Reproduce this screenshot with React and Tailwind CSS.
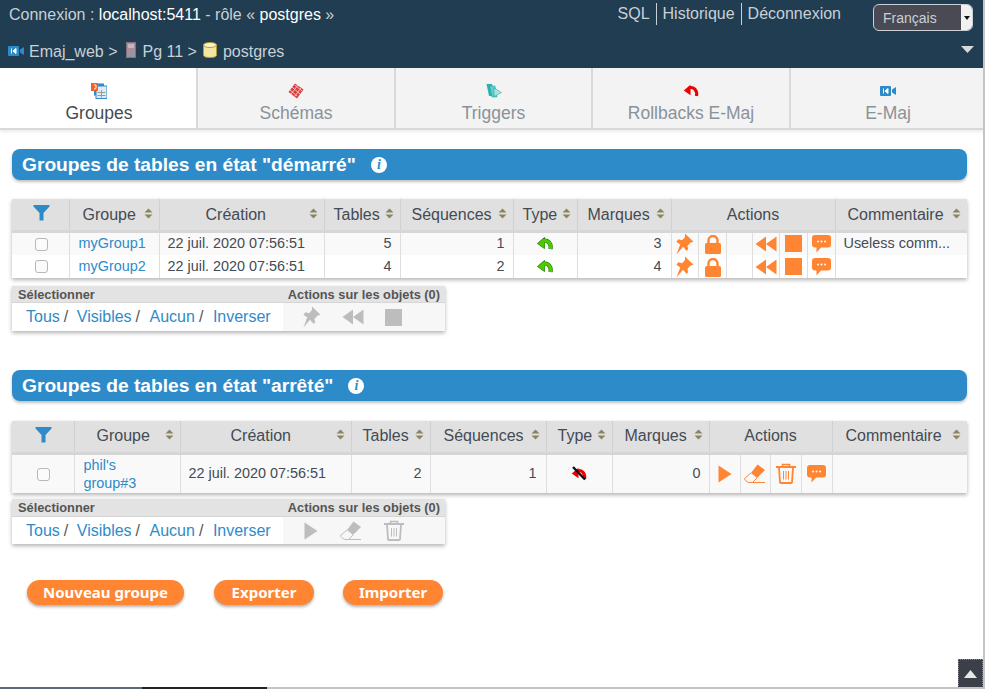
import React from "react";

const font = "font-['Liberation_Sans',Arial,sans-serif]";

function Sort() {
  return (
    <svg width="9" height="11" viewBox="0 0 9 11" className="shrink-0">
      <path d="M4.5 0.5 L8.5 4.5 H0.5 Z M4.5 10.5 L0.5 6.5 H8.5 Z" fill="#8a8560" />
    </svg>
  );
}

function Funnel({ color = "#2e8bc9" }) {
  return (
    <svg width="17" height="17" viewBox="0 0 17 17">
      <path d="M0.5 1 H16.5 V2.5 L10.5 9 V16.5 H6.5 V9 L0.5 2.5 Z" fill={color} />
    </svg>
  );
}

function Pin({ color = "#ff8533" }) {
  return (
    <svg width="19" height="22" viewBox="0 0 20 23">
      <path
        d="M10.5 0.5 L19.5 9 L16.5 10 L13 13.5 L14 17 L12 18.5 L8.5 14.5 L1.5 22.5 L5.5 12 L1.5 9 L3.5 6.5 L7.5 7.5 L10.5 4 Z"
        fill={color}
      />
    </svg>
  );
}

function Lock({ color = "#ff8533" }) {
  return (
    <svg width="16" height="19" viewBox="0 0 16 19" className="ml-[2px] mt-[2px]">
      <path d="M3.5 8 V5.5 a4.5 4.5 0 0 1 9 0 V8" fill="none" stroke={color} strokeWidth="2.4" />
      <rect x="0" y="8" width="16" height="11" rx="1.5" fill={color} />
    </svg>
  );
}

function Rewind({ color = "#ff8533" }) {
  return (
    <svg width="22" height="16" viewBox="0 0 22 16">
      <path d="M0.5 8 L11 0.5 V15.5 Z M11 8 L21.5 0.5 V15.5 Z" fill={color} />
    </svg>
  );
}

function Stop({ color = "#ff8533" }) {
  return <div className="h-[17px] w-[17px]" style={{ backgroundColor: color }} />;
}

function Chat() {
  return (
    <svg width="19" height="18" viewBox="0 0 19 18">
      <path d="M3 0 H16 a3 3 0 0 1 3 3 V9.5 a3 3 0 0 1 -3 3 H9 L4.5 17.5 V12.5 H3 a3 3 0 0 1 -3 -3 V3 a3 3 0 0 1 3 -3 Z" fill="#ff8533" />
      <circle cx="6" cy="6.5" r="1" fill="#fff" />
      <circle cx="9.5" cy="6.5" r="1" fill="#fff" />
      <circle cx="13" cy="6.5" r="1" fill="#fff" />
    </svg>
  );
}

function Play({ color = "#ff8533" }) {
  return (
    <svg width="14" height="18" viewBox="0 0 14 18">
      <path d="M0.5 0.5 L13.5 9 L0.5 17.5 Z" fill={color} />
    </svg>
  );
}

function Eraser({ color = "#ff8533" }) {
  return (
    <svg width="22" height="20" viewBox="0 0 22 20">
      <path d="M13.5 0.5 L21 6 L13 14 L7 9 Z" fill={color} />
      <path d="M7 9 L1 14 Q0 15.5 1.5 16.5 L4.5 18.5 H8.5 L13 14" fill="none" stroke={color} strokeWidth="1" />
      <path d="M8.5 18.5 H21" stroke={color} strokeWidth="1" />
    </svg>
  );
}

function Trash({ color = "#ff8533" }) {
  return (
    <svg width="20" height="21" viewBox="0 0 20 21" fill="none" stroke={color}>
      <path d="M0 4 H20" strokeWidth="2" />
      <path d="M6.5 4 V1.5 H13.5 V4" strokeWidth="1.6" />
      <path d="M3 4.5 L4 19.5 Q4 20 5 20 H15 Q16 20 16 19.5 L17 4.5" strokeWidth="1.8" />
      <path d="M7.5 8 V16.5 M10 8 V16.5 M12.5 8 V16.5" strokeWidth="1" />
    </svg>
  );
}

// curved "undo" arrow used for the type column and the rollback tab
function UndoArrow({ color, outline }) {
  const arc = "M13.5 12 C14.5 6 10.5 2.5 6 3.8";
  return (
    <svg width="16" height="14" viewBox="0 0 16 14">
      {outline && <path d={arc} fill="none" stroke={outline} strokeWidth="4.2" />}
      {outline && <path d="M0.5 6.5 L7.5 0.5 V11.5 Z" fill={outline} stroke={outline} strokeWidth="0.8" />}
      <path d={arc} fill="none" stroke={color} strokeWidth="3.2" />
      <path d="M0.8 6.5 L7.5 0.8 V11.2 Z" fill={color} />
    </svg>
  );
}

function ReverseOff() {
  return (
    <svg width="16" height="15" viewBox="0 0 16 15">
      <path d="M13.5 13 C14.5 7 10.5 3.5 6 4.8" fill="none" stroke="#ee0000" strokeWidth="3.2" />
      <path d="M0.8 7.5 L7.5 1.8 V12.2 Z" fill="#ee0000" />
      <path d="M2 1 L14 13.5" stroke="#111" strokeWidth="2.4" />
    </svg>
  );
}

function GroupsIcon() {
  return (
    <svg width="16" height="16" viewBox="0 0 16 16">
      <rect x="3" y="0.5" width="10" height="12" fill="#2e8bc9" />
      <rect x="5" y="3" width="11" height="12.5" fill="#dfeaf3" stroke="#2e8bc9" />
      <path d="M6.5 9.5 H14.5 M6.5 12.5 H14.5 M10.5 7 V14.5" stroke="#9a9a9a" />
      <rect x="0" y="0" width="7" height="8" fill="#f2622b" />
      <path d="M3 2 H5 V5 Q5 6 3 6" stroke="#fff" fill="none" />
    </svg>
  );
}

function SchemaIcon() {
  return (
    <svg width="16" height="16" viewBox="0 0 16 16">
      <path d="M7 0.5 L15.5 6.5 L9 15.5 L0.5 9 Z" fill="#d9403f" />
      <path d="M4 4 L12 11 M7 2 L14 8 M2 7 L9 13 M10 2 L3 11 M13 5 L7 13" stroke="#f6c7c4" strokeWidth="0.9" />
    </svg>
  );
}

function TriggerIcon() {
  return (
    <svg width="16" height="16" viewBox="0 0 16 16">
      <path d="M0.5 1 H6 L8 13 H3 Z" fill="#2bb3b1" />
      <path d="M3.5 3 H9 L11 14 H6 Z" fill="#5fcfc9" stroke="#1f9a9a" strokeWidth="0.5" />
      <path d="M8 5 L15.5 9.5 L8 13.5 Z" fill="#a7e3e5" stroke="#1f9a9a" strokeWidth="0.5" />
    </svg>
  );
}

function Camera({ w = 16, h = 12 }) {
  return (
    <svg width={w} height={h} viewBox="0 0 16 12">
      <rect x="0" y="1" width="11" height="10" rx="1" fill="#2e8bc9" />
      <path d="M12 4.5 L16 2 V10 L12 7.5 Z" fill="#2e8bc9" />
      <path d="M3.5 3.5 V8.5 M8 3.5 L5 6 L8 8.5 Z" stroke="#fff" fill="#fff" strokeWidth="1" />
    </svg>
  );
}

function ServerIcon() {
  return (
    <svg width="10" height="16" viewBox="0 0 10 16">
      <rect x="0.5" y="0.5" width="9" height="15" fill="#a88f9c" stroke="#857280" />
      <path d="M2 3 H8 M2 5 H8" stroke="#e5dbe0" />
      <rect x="5" y="11" width="3" height="3" fill="#39c0c0" />
    </svg>
  );
}

function DbIcon() {
  return (
    <svg width="14" height="16" viewBox="0 0 14 16">
      <path d="M0.5 3 V13 Q0.5 15.5 7 15.5 Q13.5 15.5 13.5 13 V3 Z" fill="#f3e6a0" stroke="#b39b3d" />
      <ellipse cx="7" cy="3" rx="6.5" ry="2.5" fill="#fbf3c4" stroke="#b39b3d" />
    </svg>
  );
}

function Tab({ icon, label, active, className }) {
  return (
    <div
      className={`flex h-[60px] flex-col items-center justify-between pb-[5px] pt-[15px] ${className} ${
        active ? "bg-white text-[#444b54]" : "bg-[#f3f3f3] text-[#8a9299]"
      }`}
    >
      <div className="flex h-[16px] items-center">{icon}</div>
      <div className="text-[17.5px] leading-[20px]">{label}</div>
    </div>
  );
}

function Banner({ title }) {
  return (
    <div className="mx-3 flex h-[31px] items-center rounded-[8px] bg-[#2e8bc9] pl-[10px] text-white shadow-[0_2px_3px_rgba(0,0,0,0.25)]">
      <span className="text-[19.2px] font-bold leading-none">{title}</span>
      <span className="ml-[15px] flex h-[16px] w-[16px] items-center justify-center rounded-full bg-white font-['Liberation_Serif',serif] text-[14px] font-bold italic leading-none text-[#2e8bc9]">
        i
      </span>
    </div>
  );
}

function HeadCell({ children, sort = true, pad = "justify-center" }) {
  return (
    <th className="h-[32px] border-r border-[#d0d0d0] p-0 text-[16px] font-normal text-[#444b54] last:border-r-0">
      <div className={`relative flex items-center ${pad} px-[8px]`}>
        <span>{children}</span>
        {sort && <span className="absolute right-[6px] top-[5px]"><Sort /></span>}
      </div>
    </th>
  );
}

function FooterBar({ icons, gaps, top, head, body }) {
  return (
    <div className={`mx-3 w-[433px] shadow-[0_2px_4px_rgba(0,0,0,0.3)] ${top}`}>
      <div className={`flex items-center justify-between bg-[#e3e3e3] pl-[6px] pr-[5px] pt-[2px] text-[12.8px] font-bold leading-none text-[#555] ${head}`}>
        <span>Sélectionner</span>
        <span>Actions sur les objets (0)</span>
      </div>
      <div className={`flex border-t border-[#d6d6d6] bg-white ${body}`}>
        <div className="flex w-[271px] items-center pl-[14px] text-[16px] text-[#2e8bc9]">
          <span>Tous</span>
          <span className="ml-1 text-[#555]">/</span>
          <span className="ml-[8.5px]">Visibles</span>
          <span className="ml-1 text-[#555]">/</span>
          <span className="ml-[9.5px]">Aucun</span>
          <span className="ml-1 text-[#555]">/</span>
          <span className="ml-[9.5px]">Inverser</span>
        </div>
        <div className={`flex flex-1 items-center bg-[#f7f7f7] ${gaps}`}>{icons}</div>
      </div>
    </div>
  );
}

function ActionCell({ children }) {
  return (
    <td className="border-r border-[#dedede] p-0 last:border-r-0">
      <div className="flex items-center justify-center">{children}</div>
    </td>
  );
}

function GroupRow({ name, tables, seqs, marks, comment, shaded }) {
  return (
    <tr className={`${shaded ? "h-[24px] bg-[#f9f9f9]" : "h-[23px] bg-white"} text-[14.4px] text-[#444b54]`}>
      <td className="border-r border-[#dedede] p-0 pl-[3px] text-center">
        <span className="inline-block h-[13px] w-[13px] rounded-[3px] border border-[#b8b8b8] bg-[#fbfbfb] align-middle" />
      </td>
      <td className="border-r border-[#dedede] p-0 pl-[9px] text-[#2e8bc9]">{name}</td>
      <td className="border-r border-[#dedede] p-0 pl-[8px]">22 juil. 2020 07:56:51</td>
      <td className="border-r border-[#dedede] p-0 pr-[8px] text-right">{tables}</td>
      <td className="border-r border-[#dedede] p-0 pr-[8px] text-right">{seqs}</td>
      <td className="border-r border-[#dedede] p-0">
        <div className="flex justify-center">
          <UndoArrow color="#4ccc00" outline="#1f6b00" />
        </div>
      </td>
      <td className="border-r border-[#dedede] p-0 pr-[9px] text-right">{marks}</td>
      <ActionCell><Pin /></ActionCell>
      <ActionCell><Lock /></ActionCell>
      <ActionCell />
      <ActionCell><Rewind /></ActionCell>
      <ActionCell><Stop /></ActionCell>
      <ActionCell><Chat /></ActionCell>
      <td className="p-0 pl-[8px]">{comment}</td>
    </tr>
  );
}

export default function App() {
  return (
    <div className={`relative h-[689px] w-[985px] overflow-hidden bg-white ${font}`}>
      {/* header */}
      <div className="relative h-[68px] w-[983px] bg-[#203d52] text-[16px] text-[#c9d0d6]">
        <div className="flex items-start justify-between pl-[9px] pt-[4px]">
          <div className="leading-[22px]">
            Connexion : <span className="text-white">localhost:5411</span> - rôle « <span className="text-white">postgres</span> »
          </div>
          <div className="flex">
            <div className="mr-[32px] flex h-[20px] items-center leading-[22px]">
              <span className="border-r border-[#c9d0d6] pr-[6px]">SQL</span>
              <span className="border-r border-[#c9d0d6] px-[6px]">Historique</span>
              <span className="pl-[6px]">Déconnexion</span>
            </div>
            <div className="mr-[10px] flex h-[27px] w-[100px] overflow-hidden rounded-[6px] border border-[#c9d0d6] bg-[#4a4a55]">
              <span className="flex-1 pl-[9px] text-[14px] leading-[27px]">Français</span>
              <span className="flex w-[11px] items-center justify-center bg-[#f1f1f1]">
                <svg width="6" height="4" viewBox="0 0 6 4"><path d="M0 0 H6 L3 4 Z" fill="#111" /></svg>
              </span>
            </div>
          </div>
        </div>
        <div className="flex items-center pl-[8px] pt-[10px] leading-[22px]">
          <span className="-mt-[2px]"><Camera /></span>
          <span className="ml-[5px]">Emaj_web &gt;</span>
          <span className="-mt-[4px] ml-[8px]"><ServerIcon /></span>
          <span className="ml-[7px]">Pg 11 &gt;</span>
          <span className="-mt-[4px] ml-[6px]"><DbIcon /></span>
          <span className="ml-[6px]">postgres</span>
        </div>
        <svg width="13" height="7" viewBox="0 0 13 7" className="absolute right-[9px] top-[46px]">
          <path d="M0 0 H13 L6.5 7 Z" fill="#d8d8d8" />
        </svg>
      </div>

      {/* tabs */}
      <div className="flex w-[983px] border-b-2 border-[#d9d9d9] shadow-[0_2px_3px_rgba(0,0,0,0.08)]">
        <Tab active icon={<GroupsIcon />} label="Groupes" className="w-[198px] border-r-2 border-[#d9d9d9] pl-[2px]" />
        <Tab icon={<SchemaIcon />} label="Schémas" className="w-[198px] border-r-2 border-[#d9d9d9]" />
        <Tab icon={<TriggerIcon />} label="Triggers" className="w-[197px] border-r-2 border-[#d9d9d9]" />
        <Tab icon={<UndoArrow color="#ee0000" />} label="Rollbacks E-Maj" className="w-[198px] border-r-2 border-[#d9d9d9]" />
        <Tab icon={<Camera />} label="E-Maj" className="flex-1 pl-[2px]" />
      </div>

      {/* started groups */}
      <div className="w-[979px] pt-[19px]">
        <Banner title={'Groupes de tables en état "démarré"'} />
        <div className="mx-3 mt-[19px] shadow-[0_2px_4px_rgba(0,0,0,0.3)]">
          <table className="w-[955px] table-fixed border-collapse">
            <colgroup>
              <col className="w-[57px]" />
              <col className="w-[90px]" />
              <col className="w-[165px]" />
              <col className="w-[76px]" />
              <col className="w-[113px]" />
              <col className="w-[64px]" />
              <col className="w-[94px]" />
              <col className="w-[27px]" />
              <col className="w-[28px]" />
              <col className="w-[26px]" />
              <col className="w-[27px]" />
              <col className="w-[28px]" />
              <col className="w-[28px]" />
              <col className="w-[132px]" />
            </colgroup>
            <thead className="border-b-[3px] border-[#d6d6d6] bg-[#e0e0e0]">
              <tr>
                <HeadCell sort={false}><span className="relative left-[1px] top-[-2px] block"><Funnel /></span></HeadCell>
                <HeadCell pad="justify-start pl-[13px] translate-y-[1px]">Groupe</HeadCell>
                <HeadCell pad="justify-start pl-[46px] translate-y-[1px]">Création</HeadCell>
                <HeadCell pad="justify-start pl-[9px] translate-y-[1px]">Tables</HeadCell>
                <HeadCell pad="justify-start pl-[11px] translate-y-[1px]">Séquences</HeadCell>
                <HeadCell pad="justify-start pl-[9px] translate-y-[1px]">Type</HeadCell>
                <HeadCell pad="justify-start pl-[10px] translate-y-[1px]">Marques</HeadCell>
                <th colSpan={6} className="border-r border-[#d0d0d0] p-0 pt-[2px] text-[16px] font-normal text-[#444b54]">Actions</th>
                <HeadCell pad="justify-start pl-[12px] translate-y-[1px]">Commentaire</HeadCell>
              </tr>
            </thead>
            <tbody>
              <GroupRow shaded name="myGroup1" tables="5" seqs="1" marks="3" comment="Useless comm..." />
              <GroupRow name="myGroup2" tables="4" seqs="2" marks="4" comment="" />
            </tbody>
          </table>
        </div>
        <FooterBar
          top="mt-[8px]"
          head="h-[16px]"
          body="h-[29px]"
          gaps="gap-[21px] pl-[19px]"
          icons={
            <>
              <Pin color="#bdbdbd" />
              <Rewind color="#bdbdbd" />
              <Stop color="#bdbdbd" />
            </>
          }
        />
      </div>

      {/* stopped groups */}
      <div className="w-[979px] pt-[39px]">
        <Banner title={'Groupes de tables en état "arrêté"'} />
        <div className="mx-3 mt-[20px] shadow-[0_2px_4px_rgba(0,0,0,0.3)]">
          <table className="w-[955px] table-fixed border-collapse">
            <colgroup>
              <col className="w-[62px]" />
              <col className="w-[106px]" />
              <col className="w-[171px]" />
              <col className="w-[79px]" />
              <col className="w-[116px]" />
              <col className="w-[66px]" />
              <col className="w-[97px]" />
              <col className="w-[31px]" />
              <col className="w-[30px]" />
              <col className="w-[31px]" />
              <col className="w-[31px]" />
              <col className="w-[135px]" />
            </colgroup>
            <thead className="border-b-[3px] border-[#d6d6d6] bg-[#e0e0e0]">
              <tr>
                <HeadCell sort={false}><span className="relative left-[1px] top-[-2px] block"><Funnel /></span></HeadCell>
                <HeadCell pad="justify-start pl-[22px]">Groupe</HeadCell>
                <HeadCell pad="justify-start pl-[50px]">Création</HeadCell>
                <HeadCell pad="justify-start pl-[11px]">Tables</HeadCell>
                <HeadCell pad="justify-start pl-[13px]">Séquences</HeadCell>
                <HeadCell pad="justify-start pl-[11px]">Type</HeadCell>
                <HeadCell pad="justify-start pl-[12px]">Marques</HeadCell>
                <th colSpan={4} className="border-r border-[#d0d0d0] p-0 text-[16px] font-normal text-[#444b54]">Actions</th>
                <HeadCell pad="justify-start pl-[13px]">Commentaire</HeadCell>
              </tr>
            </thead>
            <tbody>
              <tr className="h-[40px] bg-[#f9f9f9] text-[14.4px] text-[#444b54]">
                <td className="border-r border-[#dedede] p-0 pl-[1px] text-center">
                  <span className="inline-block h-[13px] w-[13px] rounded-[3px] border border-[#b8b8b8] bg-[#fbfbfb] align-middle" />
                </td>
                <td className="border-r border-[#dedede] p-0 pl-[9px] leading-[18px] text-[#2e8bc9]">phil's<br />group#3</td>
                <td className="border-r border-[#dedede] p-0 pl-[8px]">22 juil. 2020 07:56:51</td>
                <td className="border-r border-[#dedede] p-0 pr-[8px] text-right">2</td>
                <td className="border-r border-[#dedede] p-0 pr-[9px] text-right">1</td>
                <td className="border-r border-[#dedede] p-0"><div className="flex justify-center"><ReverseOff /></div></td>
                <td className="border-r border-[#dedede] p-0 pr-[8px] text-right">0</td>
                <ActionCell><Play /></ActionCell>
                <ActionCell><Eraser /></ActionCell>
                <ActionCell><Trash /></ActionCell>
                <ActionCell><Chat /></ActionCell>
                <td className="p-0" />
              </tr>
            </tbody>
          </table>
        </div>
        <FooterBar
          top="mt-[6px]"
          head="h-[17px]"
          body="h-[28px]"
          gaps="gap-[22px] pl-[21px]"
          icons={
            <>
              <Play color="#bdbdbd" />
              <Eraser color="#bdbdbd" />
              <Trash color="#bdbdbd" />
            </>
          }
        />
      </div>

      {/* buttons */}
      <div className="flex pl-[27px] pt-[36px] font-['Noto_Sans',sans-serif] text-[15px] font-bold text-white">
        <div className="flex h-[25px] w-[157px] items-center justify-center rounded-[13px] bg-[#ff8533] shadow-[0_2px_3px_rgba(0,0,0,0.3)]">Nouveau groupe</div>
        <div className="ml-[30px] flex h-[25px] w-[100px] items-center justify-center rounded-[13px] bg-[#ff8533] shadow-[0_2px_3px_rgba(0,0,0,0.3)]">Exporter</div>
        <div className="ml-[29px] flex h-[25px] w-[100px] items-center justify-center rounded-[13px] bg-[#ff8533] shadow-[0_2px_3px_rgba(0,0,0,0.3)]">Importer</div>
      </div>

      {/* scroll-to-top button */}
      <div className="absolute bottom-[1px] right-[2px] flex h-[29px] w-[25px] items-center justify-center border border-dotted border-[#888] bg-[#3a3f48]">
        <svg width="13" height="8" viewBox="0 0 13 8"><path d="M0 8 H13 L6.5 0 Z" fill="#e8e8e8" /></svg>
      </div>
      {/* window edges */}
      <div className="absolute right-0 top-0 h-full w-[2px] bg-[#c4c4c4]" />
      <div className="absolute bottom-0 left-0 flex h-[2px] w-full">
        <div className="w-[142px] bg-[#5a6a78]" />
        <div className="w-[125px] bg-[#222222]" />
        <div className="flex-1 bg-[#c4c4c4]" />
      </div>
    </div>
  );
}
